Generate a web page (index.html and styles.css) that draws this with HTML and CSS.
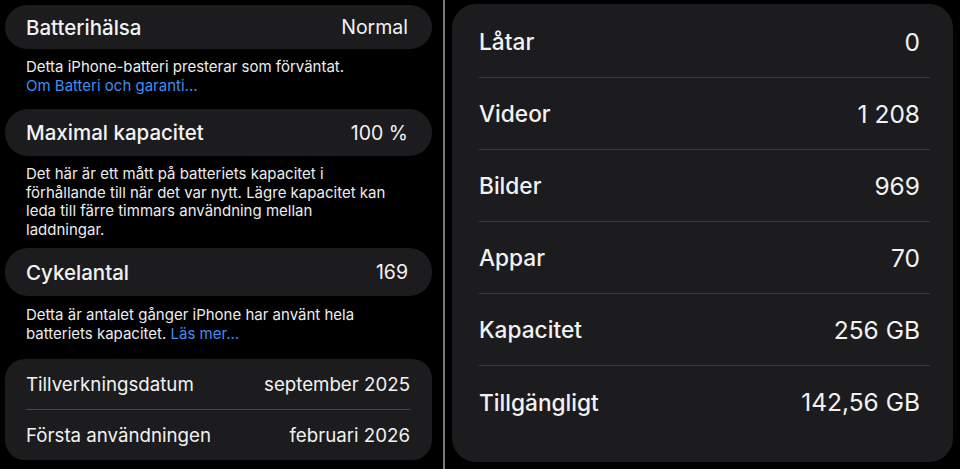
FILE: index.html
```html
<!DOCTYPE html>
<html lang="sv">
<head>
    <meta charset="UTF-8">
    <meta name="viewport" content="width=device-width, initial-scale=1.0">
    <title>Batteri och lagring</title>
    <link rel="stylesheet" href="styles.css">
</head>
<body>
    <div class="battery">
        <div class="pill first">
            <span class="label">Batterihälsa</span>
            <span class="value">Normal</span>
        </div>
        <p class="note note-short">Detta iPhone-batteri presterar som förväntat.<br><a href="#">Om Batteri och garanti...</a></p>

        <div class="pill mid">
            <span class="label">Maximal kapacitet</span>
            <span class="value">100 %</span>
        </div>
        <p class="note note-long">Det här är ett mått på batteriets kapacitet i förhållande till när det var nytt. Lägre kapacitet kan leda till färre timmars användning mellan laddningar.</p>

        <div class="pill tall">
            <span class="label">Cykelantal</span>
            <span class="value">169</span>
        </div>
        <p class="note note-cycle">Detta är antalet gånger iPhone har använt hela batteriets kapacitet. <a href="#">Läs mer...</a></p>

        <div class="group">
            <div class="group-row">
                <span>Tillverkningsdatum</span>
                <span>september 2025</span>
            </div>
            <div class="group-row">
                <span>Första användningen</span>
                <span>februari 2026</span>
            </div>
        </div>
    </div>

    <div class="divider"></div>

    <div class="storage">
        <div class="storage-card">
            <div class="stat"><span>Låtar</span><span class="num">0</span></div>
            <div class="stat"><span>Videor</span><span class="num">1 208</span></div>
            <div class="stat"><span>Bilder</span><span class="num">969</span></div>
            <div class="stat"><span>Appar</span><span class="num">70</span></div>
            <div class="stat"><span>Kapacitet</span><span class="num">256 GB</span></div>
            <div class="stat"><span>Tillgängligt</span><span class="num">142,56 GB</span></div>
        </div>
    </div>
</body>
</html>
```

FILE: styles.css
```css
body {
    margin: 0;
    height: 469px;
    overflow: hidden;
    background: #000;
    color: #f2f2f2;
    font-family: Inter, "Noto Sans", sans-serif;
    display: flex;
}

/* left column: battery */
.battery {
    width: 427px;
    padding: 5px 11px 0 5px;
}

.pill {
    height: 44px;
    border-radius: 23px;
    background: #1c1c1e;
    display: flex;
    align-items: center;
    justify-content: space-between;
    padding: 0 24px 0 21px;
    font-size: 20.5px;
}

.pill.mid {
    height: 47px;
}

.pill.tall {
    height: 48px;
}

.pill .label {
    font-weight: 500;
}

.pill .value {
    font-weight: 400;
    font-size: 19.5px;
}

.note {
    margin: 0;
    padding: 0 41px 0 21px;
    font-size: 15px;
    line-height: 18.5px;
    color: #ececec;
}

.note a {
    color: #3d8ff0;
    text-decoration: none;
}

.note-short {
    padding-top: 9px;
    padding-bottom: 14px;
}

.note-long {
    padding-top: 9px;
    padding-bottom: 9px;
}

.note-cycle {
    padding-top: 10px;
    padding-bottom: 16px;
}

.group {
    background: #1c1c1e;
    border-radius: 20px;
    padding: 0 22px 0 21px;
}

.group-row {
    height: 50px;
    display: flex;
    align-items: center;
    justify-content: space-between;
    font-size: 18.7px;
}

.group-row + .group-row {
    border-top: 1px solid #48484a;
}

/* divider between screenshots */
.divider {
    width: 2px;
    background: #7a7a7a;
}

/* right column: storage */
.storage {
    flex: 1;
    padding: 4px 7px 0 7px;
}

.storage-card {
    height: 458px;
    box-sizing: border-box;
    background: #1c1c1e;
    border-radius: 24px;
    padding: 2px 23px 0 27px;
}

.stat {
    height: 72px;
    box-sizing: border-box;
    display: flex;
    align-items: center;
    justify-content: space-between;
    padding-right: 10px;
    font-size: 24.5px;
    border-bottom: 1px solid #3a3a3c;
}

.stat:last-child {
    border-bottom: none;
}

.stat span:first-child {
    font-weight: 500;
    font-size: 22.7px;
}
```
